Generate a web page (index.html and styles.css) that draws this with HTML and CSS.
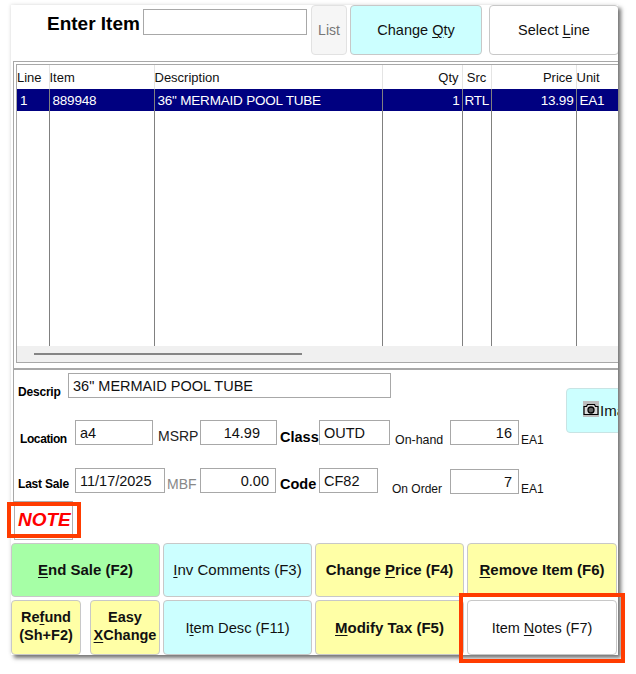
FILE: index.html
```html
<!DOCTYPE html>
<html lang="en">
<head>
<meta charset="utf-8">
<title>Point of Sale</title>
<link rel="stylesheet" href="styles.css">
</head>
<body>
<div class="window">
  <div class="toolbar">
    <span class="enter-label">Enter Item</span>
    <input class="enter-input" type="text">
    <button class="btn btn-list">List</button>
    <button class="btn btn-cyan btn-qty">Change <u>Q</u>ty</button>
    <button class="btn btn-white btn-select">Select <u>L</u>ine</button>
  </div>

  <div class="grid-outer">
    <div class="grid-inner">
      <table class="lines">
        <colgroup>
          <col class="c1"><col class="c2"><col class="c3"><col class="c4"><col class="c5"><col class="c6"><col class="c7">
        </colgroup>
        <thead>
          <tr><th>Line</th><th>Item</th><th>Description</th><th class="num">Qty</th><th class="ctr">Src</th><th class="num">Price</th><th>Unit</th></tr>
        </thead>
        <tbody>
          <tr class="selected"><td>1</td><td>889948</td><td class="desc">36" MERMAID POOL TUBE</td><td class="num">1</td><td class="src">RTL</td><td class="num">13.99</td><td>EA1</td></tr>
          <tr class="filler"><td></td><td></td><td></td><td></td><td></td><td></td><td></td></tr>
        </tbody>
      </table>
      <div class="scrollbar"><div class="thumb"></div></div>
    </div>
  </div>

  <div class="detail">
    <div class="detail-main">
      <div class="row row-desc">
        <span class="lbl lbl-desc">Descrip</span>
        <span class="field f-desc">36" MERMAID POOL TUBE</span>
      </div>
      <div class="row row-loc">
        <span class="lbl lbl-loc">Location</span>
        <span class="field f-loc">a4</span>
        <span class="plain msrp">MSRP</span>
        <span class="field num f-msrp">14.99</span>
        <span class="big class-l">Class</span>
        <span class="field f-class">OUTD</span>
        <span class="small onhand">On-hand</span>
        <span class="field num f-qty">16</span>
        <span class="small ea">EA1</span>
      </div>
      <div class="row row-last">
        <span class="lbl lbl-last">Last Sale</span>
        <span class="field f-date">11/17/2025</span>
        <span class="plain mbf">MBF</span>
        <span class="field num f-mbf">0.00</span>
        <span class="big code-l">Code</span>
        <span class="field f-code">CF82</span>
        <span class="small onorder">On Order</span>
        <span class="field num f-qty f-order">7</span>
        <span class="small ea ea2">EA1</span>
      </div>
    </div>
    <button class="btn btn-cyan btn-image">
      <svg class="cam" width="16" height="16" viewBox="0 0 16 16" aria-hidden="true">
        <rect width="16" height="16" fill="#bdbdbd"/>
        <path d="M1 5.500h2.500l1-2h7l1 2H15v8H1z" fill="#d8d8d8" stroke="#000" stroke-width="1.200"/>
        <circle cx="8" cy="9" r="3" fill="#666" stroke="#000" stroke-width="1.300"/>
      </svg><span class="image-text">Image</span>
    </button>
  </div>

  <div class="note-box"><span class="note">NOTE</span></div>

  <div class="actions">
    <button class="btn btn-green bold"><u>E</u>nd Sale (F2)</button>
    <button class="btn btn-cyan"><u>I</u>nv Comments (F3)</button>
    <button class="btn btn-yellow bold">Change <u>P</u>rice (F4)</button>
    <button class="btn btn-yellow bold"><u>R</u>emove Item (F6)</button>
    <div class="split">
      <button class="btn btn-yellow bold">Re<u>f</u>und<br>(Sh+F2)</button>
      <button class="btn btn-yellow bold">Easy<br><u>X</u>Change</button>
    </div>
    <button class="btn btn-cyan btn-desc">I<u>t</u>em Desc (F11)</button>
    <button class="btn btn-yellow bold"><u>M</u>odify Tax (F5)</button>
    <button class="btn btn-white btn-notes">Item <u>N</u>otes (F7)</button>
  </div>
</div>
<div class="callout callout-note"></div>
<div class="callout callout-notes"></div>
</body>
</html>
```

FILE: styles.css
```css
* { box-sizing: border-box; }
html, body { margin: 0; padding: 0; background: #fff; }
body {
  position: relative;
  width: 636px;
  height: 674px;
  overflow: hidden;
  font-family: "Liberation Sans", Arial, sans-serif;
  color: #000;
}
.window {
  margin: 5px 0 0 11px;
  width: 607px;
  height: 650px;
  background: #fff;
  overflow: hidden;
  box-shadow: 3px 3px 4px rgba(70, 70, 70, .75), -1px -1px 3px rgba(0, 0, 0, .08);
  display: flex;
  flex-direction: column;
}
.btn {
  font-family: "Liberation Sans", Arial, sans-serif;
  font-size: 15px;
  color: #111;
  border: 1px solid #c8c8c8;
  border-radius: 4px;
  padding: 0;
  background: #fff;
  line-height: 18px;
}
.btn u { text-underline-offset: 2px; }
.btn-cyan { background: #ccffff; }
.btn-yellow { background: #ffffa6; }
.btn-green { background: #a6ffa6; }
.btn-white { background: #fff; }
.bold { font-weight: 700; font-size: 15px; }
.btn-desc { font-size: 14.700px; }
.btn-notes { font-size: 14.500px; }

.toolbar {
  height: 56px;
  flex: none;
  display: flex;
  align-items: flex-start;
}
.enter-label {
  margin: 8px 0 0 36px;
  font-size: 19px;
  font-weight: 700;
  line-height: 22px;
  width: 96px;
  flex: none;
  white-space: nowrap;
}
.enter-input {
  width: 164px;
  height: 26px;
  margin-top: 4px;
  flex: none;
  border: 1px solid #a8a8a8;
  background: #fff;
  padding: 0;
}
.btn-list {
  width: 36px;
  height: 50px;
  margin-left: 4px;
  flex: none;
  background: #f6f6f6;
  border-color: #e2e2e2;
  color: #777;
  font-size: 14px;
}
.btn-qty { width: 132px; height: 50px; margin-left: 3px; flex: none; font-size: 14.500px; }
.btn-select { width: 130px; height: 50px; margin-left: 7px; flex: none; font-size: 14.500px; }

.grid-outer {
  margin-left: 2px;
  height: 309px;
  flex: none;
  border: solid #a8a8a8;
  border-width: 1px 0 2px 1px;
  padding: 2px 0 0 2px;
}
.grid-inner {
  height: 299px;
  border: solid #a8a8a8;
  border-width: 1px 0 1px 1px;
  display: flex;
  flex-direction: column;
  overflow: hidden;
}
.lines {
  table-layout: fixed;
  border-collapse: collapse;
  width: 601px;
  flex: none;
  font-size: 13px;
}
.c1 { width: 32px; }
.c2 { width: 105px; }
.c3 { width: 228px; }
.c4 { width: 80px; }
.c5 { width: 29px; }
.c6 { width: 85px; }
.c7 { width: 42px; }
.lines th {
  height: 24px;
  padding: 0;
  font-weight: 400;
  text-align: left;
  border-right: 1px solid #e4e4e4;
  color: #111;
  font-size: 13px;
}
.lines th.num { text-align: right; padding-right: 3px; }
.lines th.ctr { text-align: center; padding: 0; }
.lines td {
  padding: 0 0 0 3px;
  border-right: 1px solid #808080;
  font-size: 13.500px;
  letter-spacing: -.2px;
  white-space: nowrap;
}
.lines td.num { text-align: right; padding-right: 2px; }
.lines td.src { padding-left: 2px; }
.selected td { background: #000080; color: #fff; height: 22px; }
.filler td { height: 235px; }
.scrollbar {
  height: 16px;
  flex: none;
  background: #f0f0f0;
  padding: 7px 0 0 17px;
}
.thumb { width: 268px; height: 2px; background: #858585; }

.detail {
  height: 134px;
  flex: none;
  margin-left: 2px;
  border-left: 1px solid #a8a8a8;
  display: flex;
  position: relative;
  overflow: hidden;
}
.detail-main { width: 552px; flex: none; }
.row { display: flex; height: 25px; color: #000; }
.row-desc { margin-top: 3px; }
.row-loc { margin-top: 22px; }
.row-last { margin-top: 23px; }
.field {
  display: block;
  height: 25px;
  border: 1px solid #a8a8a8;
  background: #fff;
  font-size: 14.500px;
  line-height: 25px;
  padding: 0 4px;
  white-space: nowrap;
  flex: none;
  color: #111;
}
.field.num { text-align: right; padding-right: 6px; }
.lbl { font-size: 12px; font-weight: 700; flex: none; letter-spacing: -.2px; }
.lbl-desc { margin: 12px 0 0 4px; width: 50px; }
.lbl-loc { margin: 12px 0 0 6px; width: 55px; letter-spacing: -.4px; }
.lbl-last { margin: 9px 0 0 4px; width: 57px; }
.f-desc { width: 323px; }
.f-loc { width: 78px; }
.field.f-msrp { width: 77px; padding-right: 16px; }
.f-class { width: 71px; }
.f-qty { width: 69px; }
.f-date { width: 90px; }
.f-mbf { width: 76px; }
.f-code { width: 59px; }
.f-order { margin-top: 1px; }
.plain { font-size: 14px; flex: none; margin-top: 8px; color: #222; }
.msrp { margin-left: 5px; width: 42px; }
.mbf { margin-left: 2px; width: 33px; color: #888; }
.big { font-size: 14.500px; font-weight: 700; flex: none; margin-top: 9px; }
.class-l { margin-left: 3px; width: 39px; }
.code-l { margin-left: 4px; width: 39px; margin-top: 8px; }
.small { font-size: 12px; flex: none; margin-top: 13px; color: #111; }
.onhand { margin-left: 5px; width: 55px; font-size: 12.400px; }
.onorder { margin: 14px 0 0 14px; width: 58px; }
.ea { margin-left: 2px; }
.ea2 { margin-top: 14px; }
.btn-image {
  flex: none;
  position: absolute;
  left: 552px;
  top: 18px;
  width: 70px;
  height: 45px;
  text-align: left;
  padding-left: 16px;
  border-color: #c8e4e4;
  display: flex;
  align-items: center;
  white-space: nowrap;
}
.cam { flex: none; margin-top: -3px; }
.image-text { margin-left: 1px; }

.note-box {
  flex: none;
  margin: -3px 0 0 3px;
  width: 59px;
  height: 39px;
  border: 1px solid #b0b0b0;
  padding-left: 3px;
  line-height: 36px;
}
.note {
  font-size: 19px;
  font-weight: 700;
  font-style: italic;
  color: #ff0000;
}
.actions {
  flex: none;
  margin-top: 3px;
  display: grid;
  grid-template-columns: 149px 149px 149px 150px;
  grid-template-rows: 54px 55px;
  column-gap: 3px;
  row-gap: 3px;
}
.split { display: flex; justify-content: space-between; }
.split .btn { width: 70px; line-height: 18px; font-size: 14.500px; padding-bottom: 3px; }

.callout {
  position: absolute;
  border: solid #ff3c00;
  background: transparent;
  pointer-events: none;
}
.callout-note { left: 7px; top: 502px; width: 74px; height: 36px; border-width: 4px; }
.callout-notes { left: 459px; top: 593px; width: 166px; height: 70px; border-width: 4px; }
```
